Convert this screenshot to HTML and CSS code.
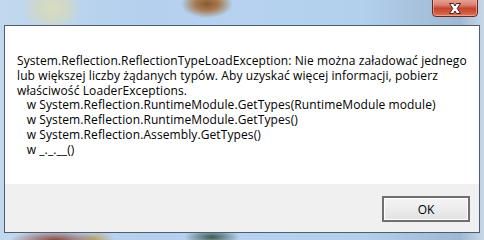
FILE: index.html
```html
<!DOCTYPE html>
<html>
<head>
<meta charset="utf-8">
<link rel="stylesheet" href="styles.css">
</head>
<body>
<div class="desktop">
  <div class="close-btn" aria-label="Zamknij">
    <svg width="22" height="13" viewBox="0 0 22 13">
      <path d="M5.5 1.5 L9.5 1.5 L11 4 L12.5 1.5 L16.5 1.5 L13.2 6.5 L16.5 11.5 L12.5 11.5 L11 9 L9.5 11.5 L5.5 11.5 L8.8 6.5 Z" fill="#ffffff" stroke="#4a2420" stroke-width="1" stroke-linejoin="round"/>
    </svg>
  </div>
  <div class="window">
    <div class="content">
      <p class="message">System.Reflection.ReflectionTypeLoadException: Nie można załadować jednego
lub większej liczby żądanych typów. Aby uzyskać więcej informacji, pobierz
właściwość LoaderExceptions.
   w System.Reflection.RuntimeModule.GetTypes(RuntimeModule module)
   w System.Reflection.RuntimeModule.GetTypes()
   w System.Reflection.Assembly.GetTypes()
   w _._.__()</p>
    </div>
    <div class="footer">
      <button class="ok-btn">OK</button>
    </div>
  </div>
</div>
</body>
</html>
```

FILE: styles.css
```css
html, body {
  margin: 0;
  padding: 0;
}
body {
  width: 484px;
  height: 240px;
  overflow: hidden;
  font-family: "Open Sans", "Noto Sans", sans-serif;
}
.desktop {
  position: relative;
  width: 484px;
  height: 240px;
  box-sizing: border-box;
  padding: 25px 4px 7px 4px;
  background:
    radial-gradient(ellipse 26px 14px at 207px 4px, #8a5a30 0%, #a57a50 45%, rgba(180,200,220,0) 100%),
    radial-gradient(ellipse 30px 24px at 52px 8px, #d8dcc0 0%, #cfd8c8 50%, rgba(190,210,230,0) 100%),
    radial-gradient(ellipse 45px 10px at 55px 240px, #8a4a40 0%, rgba(180,200,220,0) 100%),
    radial-gradient(ellipse 20px 10px at 95px 240px, #b8a870 0%, rgba(180,200,220,0) 100%),
    radial-gradient(ellipse 28px 8px at 212px 237px, #3e5a50 0%, rgba(180,200,220,0) 100%),
    linear-gradient(90deg, #c2d8ee 0%, #b4d0ee 30%, #b6d2f0 50%, #b2cfec 75%, #9fb8d2 95%, #c8d8e8 100%);
}
.close-btn {
  position: absolute;
  top: -2px;
  left: 432px;
  width: 46px;
  height: 19px;
  box-sizing: border-box;
  border: 1px solid #6b2a20;
  border-radius: 0 0 4px 4px;
  background: linear-gradient(180deg, #e9a898 0%, #d98070 35%, #c5442e 55%, #cf5a3e 80%, #e07a5a 100%);
  box-shadow: inset 0 0 0 1px rgba(255,200,190,0.5);
  display: flex;
  align-items: center;
  justify-content: center;
  padding-top: 1px;
}
.window {
  width: 100%;
  height: 100%;
  box-sizing: border-box;
  border: 1px solid #4e5d6e;
  display: flex;
  flex-direction: column;
  background: #ffffff;
}
.content {
  flex: 1;
  background: #ffffff;
}
.message {
  margin: 0;
  padding: 28px 0 0 12px;
  white-space: pre;
  font-size: 12px;
  letter-spacing: 0.1px;
  line-height: 14.8px;
  color: #000000;
}
.footer {
  height: 48px;
  background: #f0f0f0;
  display: flex;
  justify-content: flex-end;
  align-items: flex-start;
  padding: 12px 9px 0 0;
  box-sizing: border-box;
}
.ok-btn {
  width: 88px;
  height: 26px;
  box-sizing: border-box;
  border: 2px solid #707070;
  background: linear-gradient(180deg, #f4f4f4 0%, #ececec 50%, #e2e2e2 100%);
  box-shadow: inset 0 0 0 1px #ffffff;
  font-family: inherit;
  font-size: 12px;
  color: #000000;
  padding: 0;
}
```
